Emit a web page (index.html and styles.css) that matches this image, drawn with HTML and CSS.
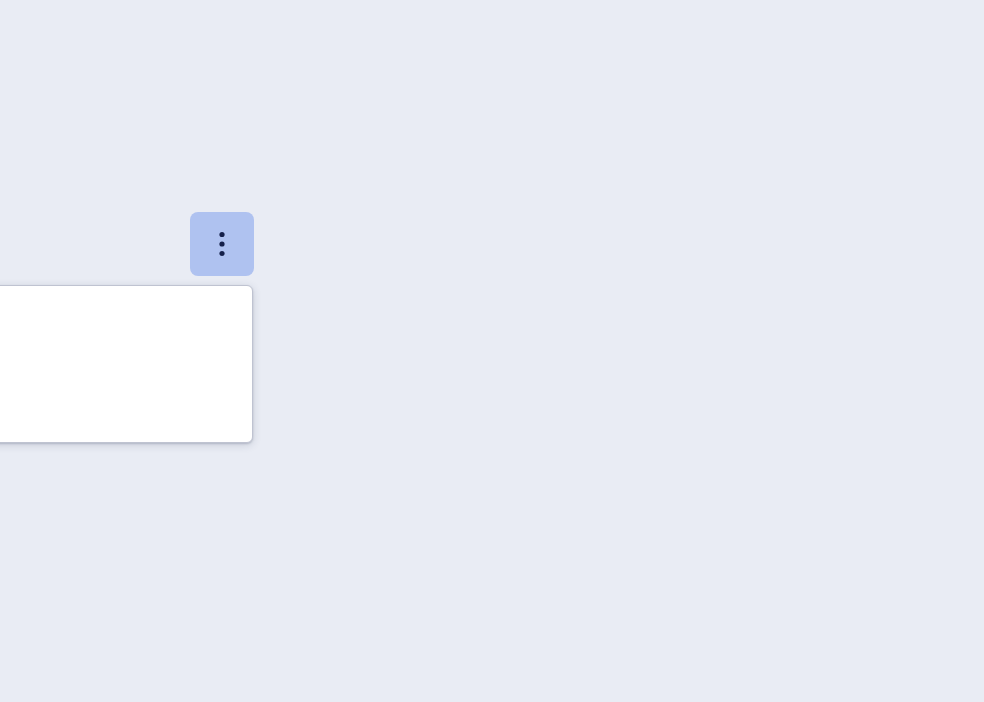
FILE: index.html
```html
<!DOCTYPE html>
<html lang="en">
<head>
<meta charset="utf-8">
<title>Menu</title>
<link rel="stylesheet" href="styles.css">
</head>
<body>
<div class="stage">
  <div class="anchor">
    <button class="more-btn" type="button" aria-label="More options">
      <svg width="24" height="30" viewBox="0 0 24 30" aria-hidden="true">
        <circle cx="12" cy="5.5" r="2.6"/>
        <circle cx="12" cy="15" r="2.6"/>
        <circle cx="12" cy="24.5" r="2.6"/>
      </svg>
    </button>
    <div class="menu" role="menu"></div>
  </div>
</div>
</body>
</html>
```
FILE: styles.css
```css
html, body {
  margin: 0;
  padding: 0;
  height: 100%;
  background: #e9ecf4;
  font-family: "Roboto", "Liberation Sans", sans-serif;
}
.stage {
  padding: 212px 0 0 190px;
}
.anchor {
  position: relative;
  width: 64px;
}
.more-btn {
  width: 64px;
  height: 64px;
  padding: 0;
  border: 0;
  border-radius: 8px;
  background: #afc2f0;
  display: flex;
  align-items: center;
  justify-content: center;
  cursor: pointer;
}
.more-btn svg {
  fill: #15204a;
  display: block;
}
.menu {
  position: absolute;
  top: 73px;
  right: 1px;
  width: 300px;
  height: 156px;
  background: #ffffff;
  border: 1px solid #bfc3d1;
  border-radius: 6px;
  box-shadow: 0 1px 2px rgba(40, 50, 80, 0.2), 0 2px 8px rgba(40, 50, 80, 0.16);
}
```
